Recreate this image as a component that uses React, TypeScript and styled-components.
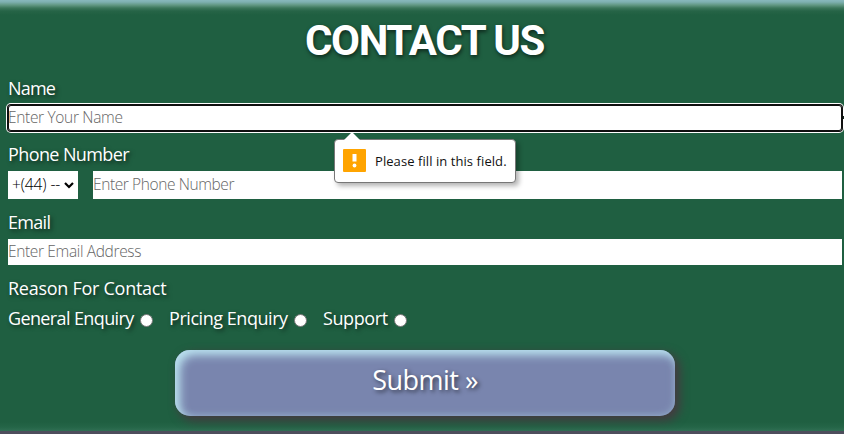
import React from "react";
import styled, { createGlobalStyle } from "styled-components";

const GlobalStyle = createGlobalStyle`
  * { box-sizing: border-box; }
  html, body { margin: 0; padding: 0; overflow: hidden; background: #4d4e5c; }
  body { font-family: "Open Sans", "Noto Sans", sans-serif; }
`;

const Section = styled.section`
  height: 431px;
  overflow: hidden;
  padding: 18px 2px 0 8px;
  color: #fff;
  background:
    linear-gradient(to bottom, #88b8bd 0, #7eb0b1 2px, #629884 5px, #3b765b 8px, #266447 11px, rgba(31, 95, 65, 0) 15px),
    linear-gradient(to top, #2f6e53 0, #246547 4px, rgba(31, 95, 65, 0) 9px),
    #1f5f41;
`;

const Title = styled.h1`
  margin: 0;
  height: 47px;
  padding-right: 1px;
  text-align: center;
  font: 700 42px/46px Roboto, sans-serif;
  letter-spacing: -1.4px;
  text-shadow: 1px 2px 4px rgba(0, 0, 0, 0.6);
`;

const Form = styled.form`
  display: flex;
  flex-direction: column;
`;

const Label = styled.label<{ $top: number; $bottom?: number; $spacing?: number }>`
  display: block;
  height: 26px;
  margin-top: ${(p) => p.$top}px;
  margin-bottom: ${(p) => p.$bottom ?? 4}px;
  font-size: 18px;
  line-height: 26px;
  white-space: nowrap;
  letter-spacing: ${(p) => p.$spacing ?? 0}px;
  text-shadow: 2px 2px 4px rgba(0, 0, 0, 0.6);
`;

const Field = styled.div`
  position: relative;
  display: flex;
  gap: 15px;
`;

const Input = styled.input<{ $height: number; $focused?: boolean; $spacing: number }>`
  flex: 1;
  min-width: 0;
  height: ${(p) => p.$height}px;
  margin: 0;
  padding: 0 0 3px;
  border: 0;
  border-radius: 0;
  outline: none;
  background: #fff;
  font: 300 15.5px/22px "Open Sans", sans-serif;
  letter-spacing: ${(p) => p.$spacing}px;
  ${(p) =>
    p.$focused &&
    `border-radius: 3px; box-shadow: inset 0 0 0 1px #101010, 0 0 0 1px #101010, 0 0 0 2px #fff;`}
  &::placeholder { color: #656565; opacity: 1; }
`;

const RequiredMark = styled.span`
  position: absolute;
  top: 11px;
  right: -2px;
  width: 1px;
  height: 3px;
  background: #14251d;
`;

const DialCode = styled.div`
  display: flex;
  align-items: center;
  width: 70px;
  height: 28px;
  padding: 0 4px 2px;
  background: #fff;
  color: #000;
  font-size: 15.5px;
  font-weight: 300;
  white-space: nowrap;
  letter-spacing: -0.1px;
  svg { flex: none; margin: 3px 0 0 auto; }
`;

const Tooltip = styled.div`
  position: absolute;
  z-index: 2;
  top: 34px;
  left: 326px;
  display: flex;
  align-items: center;
  width: 182px;
  height: 44px;
  padding: 0 0 2px 8px;
  gap: 9px;
  border: 1px solid #777;
  border-radius: 4px;
  background: #fff;
  box-shadow: 3px 3px 5px rgba(0, 0, 0, 0.3);
  color: #111;
  font-size: 13px;
  letter-spacing: 0.07px;
  white-space: nowrap;
  span { padding-top: 1px; }
`;

const TooltipArrow = styled.svg`
  position: absolute;
  top: -8px;
  left: 9px;
`;

const Choices = styled.div`
  display: flex;
  height: 26px;
  margin-top: 4px;
`;

const Choice = styled.label<{ $width: number; $spacing: number }>`
  display: flex;
  align-items: center;
  justify-content: space-between;
  width: ${(p) => p.$width}px;
  margin-right: 16px;
  font-size: 18px;
  line-height: 26px;
  letter-spacing: ${(p) => p.$spacing}px;
  white-space: nowrap;
  text-shadow: 2px 2px 4px rgba(0, 0, 0, 0.6);
`;

const Radio = styled.input`
  flex: none;
  width: 13px;
  height: 13px;
  margin: 4px 0 0;
  appearance: none;
  border: 1px solid #767676;
  border-radius: 50%;
  background: #fff;
`;

const Submit = styled.button`
  align-self: center;
  width: 500px;
  height: 66px;
  margin-top: 19px;
  padding: 0 0 7px;
  border: 0;
  border-radius: 15px;
  background: #7985ae;
  box-shadow: inset 5px 5px 10px #b9e0ee, inset 0 0 8px rgba(173, 216, 230, 0.4), 4px 4px 10px 1px #443b40;
  color: #fff;
  font: 400 27px/50px "Open Sans", sans-serif;
  letter-spacing: -0.5px;
  text-shadow: 2px 2px 4px rgba(0, 0, 0, 0.6);
`;

export default function App() {
  return (
    <>
      <GlobalStyle />
      <Section>
        <Title>CONTACT US</Title>
        <Form noValidate>
          <Label $top={10} $spacing={-0.8}>Name</Label>
          <Field>
            <Tooltip role="alert">
              <TooltipArrow width="16" height="9" viewBox="0 0 16 9">
                <path d="M0 8 8 0l8 8v1H0Z" fill="#fff" />
              </TooltipArrow>
              <svg width="23" height="23" viewBox="0 0 23 23">
                <rect width="23" height="23" rx="1" fill="#ffa400" />
                <path d="M9.5 5h4v7.5h-4z" fill="#fff" />
                <circle cx="11.5" cy="16.5" r="1.9" fill="#fff" />
              </svg>
              <span>Please fill in this field.</span>
            </Tooltip>
            <Input $height={26} $focused $spacing={-0.33} placeholder="Enter Your Name" />
            <RequiredMark />
          </Field>
          <Label $top={10} $spacing={-0.6}>Phone Number</Label>
          <Field>
            <DialCode>
              <span>+(44) --</span>
              <svg width="10" height="7" viewBox="0 0 10 7" fill="none">
                <path d="m1 1 4 4 4-4" stroke="#000" strokeWidth="2.2" />
              </svg>
            </DialCode>
            <Input $height={28} $spacing={-0.4} placeholder="Enter Phone Number" />
          </Field>
          <Label $top={10} $spacing={-0.7}>Email</Label>
          <Field>
            <Input $height={26} $spacing={-0.35} placeholder="Enter Email Address" />
          </Field>
          <Label as="div" $top={10} $bottom={0} $spacing={-0.27}>Reason For Contact</Label>
          <Choices>
            <Choice $width={145} $spacing={-0.62}>General Enquiry<Radio type="radio" name="reason" /></Choice>
            <Choice $width={138} $spacing={-0.45}>Pricing Enquiry<Radio type="radio" name="reason" /></Choice>
            <Choice $width={84} $spacing={-0.4}>Support<Radio type="radio" name="reason" /></Choice>
          </Choices>
          <Submit type="button">Submit »</Submit>
        </Form>
      </Section>
    </>
  );
}
